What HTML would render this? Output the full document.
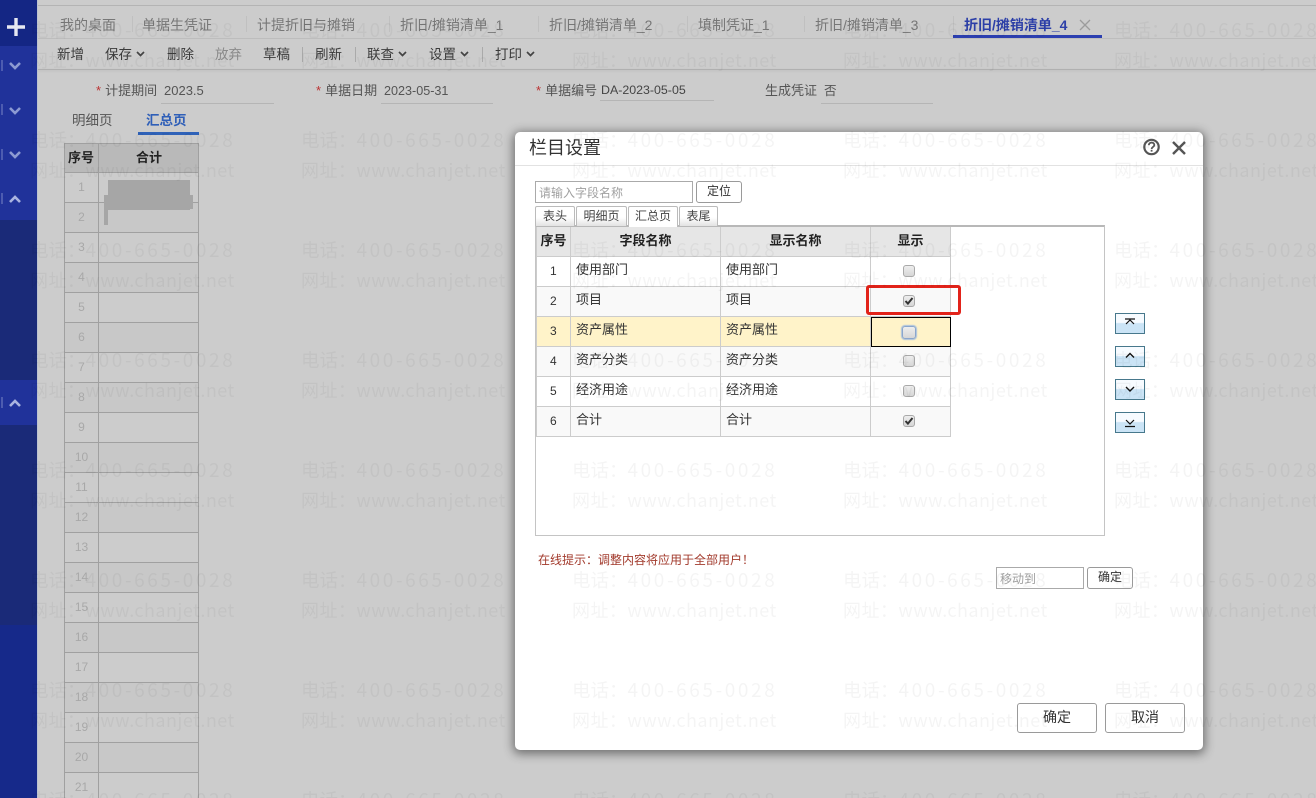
<!DOCTYPE html>
<html lang="zh-CN"><head><meta charset="utf-8"><title>栏目设置</title>
<style>
*{box-sizing:border-box}
html,body{margin:0;padding:0;width:1316px;height:798px;overflow:hidden;background:#ccc}
body{font-family:"Liberation Sans","Noto Sans CJK SC",sans-serif;color:#333;font-size:13px}
#root{position:relative;width:1316px;height:798px;overflow:hidden;background:#ccc}
.a{position:absolute;white-space:nowrap;line-height:1}
.b{position:absolute}
.tab{position:absolute;top:17px;font-size:14px;line-height:16px;color:#777;white-space:nowrap}
.tool{position:absolute;top:47px;font-size:13.5px;line-height:15px;color:#3a3a3a;white-space:nowrap}
.lab{position:absolute;top:84px;font-size:13px;line-height:14px;color:#555;white-space:nowrap}
.lab i{color:#b33;font-style:normal;margin-right:4px}
.val{position:absolute;top:84px;font-size:12.6px;line-height:14px;color:#555;white-space:nowrap}
.ul{position:absolute;top:103px;height:1px;background:#b5b5b5}
.ln{position:absolute;left:64px;width:135px;height:1px;background:#a0a0a0}
.n{position:absolute;left:65px;width:33px;text-align:center;font-size:12px;line-height:14px;color:#a8a8a8}
.st{position:absolute;left:65px;width:133px;height:30px;background:#c8c8c8}
.dlg{position:absolute;left:515px;top:132px;width:688px;height:618px;background:#fff;border-radius:5px;box-shadow:0 2px 10px 2px rgba(0,0,0,.45)}
.btn{position:absolute;background:#fff;border:1px solid #9a9a9a;border-radius:3px;text-align:center;color:#333}
.tb{position:absolute;top:206px;height:20px;border:1px solid #bbb;border-bottom:0;background:linear-gradient(#fff,#fff 55%,#e2e2e2);text-align:center;font-size:12px;line-height:18px;color:#444;border-radius:2px 2px 0 0}
.c{position:absolute;font-size:13px;line-height:16px;color:#333;white-space:nowrap}
.h{position:absolute;top:227px;height:29px;background:#e6e6e6;font-size:13px;font-weight:bold;line-height:27px;text-align:center;color:#222}
.rl{position:absolute;left:536px;width:415px;height:1px;background:#ccc}
.vl{position:absolute;top:227px;height:210px;width:1px;background:#ccc}
.cb{position:absolute;left:903px;width:12px;height:12px;border:1px solid #a9a9a9;border-radius:3px;background:linear-gradient(#eee,#d6d6d6)}
.cb svg{position:absolute;left:0;top:0}
.mv{position:absolute;left:1115px;width:30px;height:21px;border:1px solid #47788c;background:linear-gradient(#f7fbff 0,#f7fbff 45%,#cbe4f6 50%,#cbe4f6 100%)}
.mv svg{position:absolute;left:0;top:0}
.ch{position:absolute;left:8px}
.wm{position:absolute;white-space:nowrap;font-family:"Noto Sans CJK SC","Liberation Sans",sans-serif;font-size:18.5px;line-height:24px;color:rgba(0,0,0,.045);pointer-events:none}
.wm b{font-weight:normal;font-size:19px;letter-spacing:2.6px}
.u{letter-spacing:.45px;font-size:18px}
</style></head><body><div id="root">

<!-- sidebar -->
<div class="b" style="left:0;top:0;width:37px;height:46px;background:#142684"></div>
<div class="b" style="left:0;top:46px;width:37px;height:174px;background:#20329a"></div>
<div class="b" style="left:0;top:220px;width:37px;height:160px;background:#1a2a78"></div>
<div class="b" style="left:0;top:380px;width:37px;height:45px;background:#20329a"></div>
<div class="b" style="left:0;top:425px;width:37px;height:200px;background:#1a2a78"></div>
<div class="b" style="left:0;top:625px;width:37px;height:173px;background:#16298a"></div>
<div class="b" style="left:37px;top:0;width:1px;height:798px;background:#bcc3d0"></div>
<svg class="b" style="left:7px;top:18px" width="18" height="18"><path d="M9 0v18M0 9h18" stroke="#e6e8f2" stroke-width="3.4"/></svg>
<div class="b" style="left:1px;top:60px;width:2px;height:11px;background:#4d5cb0"></div>
<div class="b" style="left:1px;top:104px;width:2px;height:11px;background:#4d5cb0"></div>
<div class="b" style="left:1px;top:149px;width:2px;height:11px;background:#4d5cb0"></div>
<div class="b" style="left:1px;top:193px;width:2px;height:11px;background:#4d5cb0"></div>
<div class="b" style="left:1px;top:397px;width:2px;height:11px;background:#4d5cb0"></div>
<svg class="ch" style="top:61px" width="14" height="9"><path d="M2 2l5 5 5-5" fill="none" stroke="#8c9ad2" stroke-width="2.6"/></svg>
<svg class="ch" style="top:106px" width="14" height="9"><path d="M2 2l5 5 5-5" fill="none" stroke="#8c9ad2" stroke-width="2.6"/></svg>
<svg class="ch" style="top:150px" width="14" height="9"><path d="M2 2l5 5 5-5" fill="none" stroke="#8c9ad2" stroke-width="2.6"/></svg>
<svg class="ch" style="top:195px" width="14" height="9"><path d="M2 7l5-5 5 5" fill="none" stroke="#aab4e0" stroke-width="2.6"/></svg>
<svg class="ch" style="top:399px" width="14" height="9"><path d="M2 7l5-5 5 5" fill="none" stroke="#aab4e0" stroke-width="2.6"/></svg>

<!-- top lines -->
<div class="b" style="left:38px;top:5px;width:1278px;height:1px;background:#b4b4b4"></div>
<div class="b" style="left:38px;top:38px;width:1278px;height:1px;background:#bdbdbd"></div>
<div class="b" style="left:38px;top:69px;width:1278px;height:1px;background:#b0b0b0;box-shadow:0 1px 2px rgba(0,0,0,.1)"></div>

<!-- tabs -->
<div class="tab" style="left:60px">我的桌面</div>
<div class="tab" style="left:142px">单据生凭证</div>
<div class="tab" style="left:257px">计提折旧与摊销</div>
<div class="tab" style="left:400px">折旧/摊销清单_1</div>
<div class="tab" style="left:549px">折旧/摊销清单_2</div>
<div class="tab" style="left:698px">填制凭证_1</div>
<div class="tab" style="left:815px">折旧/摊销清单_3</div>
<div class="tab" style="left:964px;color:#2c3fa8;font-weight:bold">折旧/摊销清单_4</div>
<div class="b" style="left:132px;top:16px;width:1px;height:16px;background:#c0c0c0"></div>
<div class="b" style="left:246px;top:16px;width:1px;height:16px;background:#c0c0c0"></div>
<div class="b" style="left:389px;top:16px;width:1px;height:16px;background:#c0c0c0"></div>
<div class="b" style="left:538px;top:16px;width:1px;height:16px;background:#c0c0c0"></div>
<div class="b" style="left:687px;top:16px;width:1px;height:16px;background:#c0c0c0"></div>
<div class="b" style="left:804px;top:16px;width:1px;height:16px;background:#c0c0c0"></div>
<div class="b" style="left:953px;top:16px;width:1px;height:16px;background:#c0c0c0"></div>
<svg class="b" style="left:1079px;top:19px" width="12" height="12"><path d="M1 1l10 10M11 1L1 11" stroke="#9c9c9c" stroke-width="1.3"/></svg>
<div class="b" style="left:953px;top:35px;width:149px;height:3px;background:#2c3fb0"></div>

<!-- toolbar -->
<div class="tool" style="left:57px">新增</div>
<div class="tool" style="left:105px">保存</div>
<div class="tool" style="left:167px">删除</div>
<div class="tool" style="left:215px;color:#8a8a8a">放弃</div>
<div class="tool" style="left:263px">草稿</div>
<div class="tool" style="left:315px">刷新</div>
<div class="tool" style="left:367px">联查</div>
<div class="tool" style="left:429px">设置</div>
<div class="tool" style="left:495px">打印</div>
<svg class="b" style="left:136px;top:51px" width="9" height="7"><path d="M1 1l3.500 3.500L8 1" fill="none" stroke="#444" stroke-width="1.7"/></svg>
<svg class="b" style="left:398px;top:51px" width="9" height="7"><path d="M1 1l3.500 3.500L8 1" fill="none" stroke="#444" stroke-width="1.7"/></svg>
<svg class="b" style="left:460px;top:51px" width="9" height="7"><path d="M1 1l3.500 3.500L8 1" fill="none" stroke="#444" stroke-width="1.7"/></svg>
<svg class="b" style="left:526px;top:51px" width="9" height="7"><path d="M1 1l3.500 3.500L8 1" fill="none" stroke="#444" stroke-width="1.7"/></svg>
<div class="b" style="left:302px;top:47px;width:1px;height:15px;background:#aaa"></div>
<div class="b" style="left:355px;top:47px;width:1px;height:15px;background:#aaa"></div>
<div class="b" style="left:482px;top:47px;width:1px;height:15px;background:#aaa"></div>

<!-- form -->
<div class="lab" style="left:96px"><i>*</i>计提期间</div><div class="val" style="left:164px;font-size:13px">2023.5</div><div class="ul" style="left:161px;width:113px"></div>
<div class="lab" style="left:316px"><i>*</i>单据日期</div><div class="val" style="left:384px">2023-05-31</div><div class="ul" style="left:381px;width:112px"></div>
<div class="lab" style="left:536px"><i>*</i>单据编号</div><div class="val" style="left:601px;top:83px;color:#444;font-size:12.4px">DA-2023-05-05</div><div class="ul" style="left:600px;width:114px;top:100px"></div>
<div class="lab" style="left:765px">生成凭证</div><div class="val" style="left:824px">否</div><div class="ul" style="left:821px;width:112px"></div>
<div class="a" style="left:72px;top:113px;font-size:13.5px;line-height:15px;color:#555">明细页</div>
<div class="a" style="left:146px;top:113px;font-size:13.5px;line-height:15px;color:#2f5fb8;font-weight:bold">汇总页</div>
<div class="b" style="left:138px;top:132px;width:61px;height:3px;background:#2f62b8"></div>

<!-- left grid -->
<div class="b" style="left:64px;top:143px;width:135px;height:29px;background:#b9b9b9"></div>
<div class="st" style="top:202px"></div><div class="st" style="top:262px"></div><div class="st" style="top:322px"></div><div class="st" style="top:382px"></div><div class="st" style="top:442px"></div><div class="st" style="top:502px"></div><div class="st" style="top:562px"></div><div class="st" style="top:622px"></div><div class="st" style="top:682px"></div><div class="st" style="top:742px"></div>
<div class="b" style="left:64px;top:143px;width:1px;height:655px;background:#a0a0a0"></div>
<div class="b" style="left:98px;top:143px;width:1px;height:655px;background:#a0a0a0"></div>
<div class="b" style="left:198px;top:143px;width:1px;height:655px;background:#a0a0a0"></div>
<div class="ln" style="top:143px"></div><div class="ln" style="top:172px"></div><div class="ln" style="top:202px"></div><div class="ln" style="top:232px"></div><div class="ln" style="top:262px"></div><div class="ln" style="top:292px"></div><div class="ln" style="top:322px"></div><div class="ln" style="top:352px"></div><div class="ln" style="top:382px"></div><div class="ln" style="top:412px"></div><div class="ln" style="top:442px"></div><div class="ln" style="top:472px"></div><div class="ln" style="top:502px"></div><div class="ln" style="top:532px"></div><div class="ln" style="top:562px"></div><div class="ln" style="top:592px"></div><div class="ln" style="top:622px"></div><div class="ln" style="top:652px"></div><div class="ln" style="top:682px"></div><div class="ln" style="top:712px"></div><div class="ln" style="top:742px"></div><div class="ln" style="top:772px"></div>
<div class="a" style="left:68px;top:150px;font-size:13px;line-height:15px;font-weight:bold;color:#222">序号</div>
<div class="a" style="left:136px;top:150px;font-size:13px;line-height:15px;font-weight:bold;color:#222">合计</div>
<div class="n" style="top:180px">1</div><div class="n" style="top:210px">2</div><div class="n" style="top:240px">3</div><div class="n" style="top:270px">4</div><div class="n" style="top:300px">5</div><div class="n" style="top:330px">6</div><div class="n" style="top:360px">7</div><div class="n" style="top:390px">8</div><div class="n" style="top:420px">9</div><div class="n" style="top:450px">10</div><div class="n" style="top:480px">11</div><div class="n" style="top:510px">12</div><div class="n" style="top:540px">13</div><div class="n" style="top:570px">14</div><div class="n" style="top:600px">15</div><div class="n" style="top:630px">16</div><div class="n" style="top:660px">17</div><div class="n" style="top:690px">18</div><div class="n" style="top:720px">19</div><div class="n" style="top:750px">20</div><div class="n" style="top:780px">21</div>
<div class="b" style="left:108px;top:180px;width:82px;height:30px;background:#a6a6a6"></div>
<div class="b" style="left:104px;top:195px;width:89px;height:14px;background:#a6a6a6"></div>
<div class="b" style="left:104px;top:195px;width:4px;height:30px;background:#a6a6a6"></div>

<!-- dialog -->
<div class="dlg"></div>
<div class="a" style="left:529px;top:138px;font-size:18px;line-height:20px;color:#333">栏目设置</div>
<div class="b" style="left:515px;top:165px;width:688px;height:1px;background:#e2e2e2"></div>
<svg class="b" style="left:1142px;top:137px" width="20" height="20"><circle cx="9.500" cy="10" r="7.200" fill="none" stroke="#555" stroke-width="2.200"/><path d="M6.800 8.200c.2-3.600 5.600-3.400 5.500-.2 0 2-2.600 1.900-2.700 4" fill="none" stroke="#555" stroke-width="1.800"/><rect x="8.700" y="12.800" width="1.800" height="1.800" fill="#555"/></svg>
<svg class="b" style="left:1171px;top:140px" width="16" height="16"><path d="M2 2l12 12M14 2L2 14" stroke="#555" stroke-width="2.400"/></svg>

<div class="b" style="left:535px;top:181px;width:158px;height:22px;border:1px solid #aaa;background:#fff"></div>
<div class="a" style="left:539px;top:186px;font-size:12px;line-height:14px;color:#a0a0a0">请输入字段名称</div>
<div class="btn" style="left:696px;top:181px;width:46px;height:22px;font-size:12px;line-height:19px">定位</div>

<div class="b" style="left:535px;top:225px;width:570px;height:311px;border:1px solid #c4c4c4;border-top:2px solid #b8b8b8;background:transparent"></div>
<div class="tb" style="left:535px;width:40px">表头</div>
<div class="tb" style="left:576px;width:51px">明细页</div>
<div class="tb" style="left:628px;width:50px;background:#fff;height:21px">汇总页</div>
<div class="tb" style="left:679px;width:39px">表尾</div>

<div class="b" style="left:536px;top:286px;width:414px;height:30px;background:#f9f9f9"></div>
<div class="b" style="left:536px;top:316px;width:414px;height:30px;background:#fff3c9"></div>
<div class="b" style="left:536px;top:346px;width:414px;height:30px;background:#f9f9f9"></div>
<div class="b" style="left:536px;top:406px;width:414px;height:30px;background:#f9f9f9"></div>
<div class="h" style="left:537px;width:33px">序号</div>
<div class="h" style="left:571px;width:149px">字段名称</div>
<div class="h" style="left:721px;width:149px">显示名称</div>
<div class="h" style="left:871px;width:79px">显示</div>
<div class="rl" style="top:256px"></div><div class="rl" style="top:286px"></div><div class="rl" style="top:316px"></div><div class="rl" style="top:346px"></div><div class="rl" style="top:376px"></div><div class="rl" style="top:406px"></div><div class="rl" style="top:436px"></div>
<div class="vl" style="left:536px"></div><div class="vl" style="left:570px"></div><div class="vl" style="left:720px"></div><div class="vl" style="left:870px"></div><div class="vl" style="left:950px"></div>

<div class="c" style="left:550px;top:263px;font-size:12px">1</div><div class="c" style="left:576px;top:262px">使用部门</div><div class="c" style="left:726px;top:262px">使用部门</div>
<div class="c" style="left:550px;top:293px;font-size:12px">2</div><div class="c" style="left:576px;top:292px">项目</div><div class="c" style="left:726px;top:292px">项目</div>
<div class="c" style="left:550px;top:323px;font-size:12px">3</div><div class="c" style="left:576px;top:322px">资产属性</div><div class="c" style="left:726px;top:322px">资产属性</div>
<div class="c" style="left:550px;top:353px;font-size:12px">4</div><div class="c" style="left:576px;top:352px">资产分类</div><div class="c" style="left:726px;top:352px">资产分类</div>
<div class="c" style="left:550px;top:383px;font-size:12px">5</div><div class="c" style="left:576px;top:382px">经济用途</div><div class="c" style="left:726px;top:382px">经济用途</div>
<div class="c" style="left:550px;top:413px;font-size:12px">6</div><div class="c" style="left:576px;top:412px">合计</div><div class="c" style="left:726px;top:412px">合计</div>

<div class="b" style="left:871px;top:317px;width:80px;height:30px;border:1px solid #000;background:#fff3c9"></div>
<div class="cb" style="top:265px"></div>
<div class="cb" style="top:295px"><svg width="10" height="10"><path d="M1.500 5l2.400 2.600L8.500 2" fill="none" stroke="#333" stroke-width="2"/></svg></div>
<div class="cb" style="top:326px;left:902px;width:14px;height:13px;border:1px solid #8aa6cc;box-shadow:0 0 1px 1px #a8c0de"></div>
<div class="cb" style="top:355px"></div>
<div class="cb" style="top:385px"></div>
<div class="cb" style="top:415px"><svg width="10" height="10"><path d="M1.500 5l2.400 2.600L8.500 2" fill="none" stroke="#333" stroke-width="2"/></svg></div>
<div class="b" style="left:866px;top:285px;width:95px;height:30px;border:3px solid #e2231a;border-radius:3px"></div>

<div class="mv" style="top:313px"><svg width="28" height="19"><path d="M9 5h10M10 10l4-4 4 4" fill="none" stroke="#111" stroke-width="1.200"/></svg></div>
<div class="mv" style="top:346px"><svg width="28" height="19"><path d="M10 10.500l4-4 4 4" fill="none" stroke="#111" stroke-width="1.400"/></svg></div>
<div class="mv" style="top:379px"><svg width="28" height="19"><path d="M10 7l4 4 4-4" fill="none" stroke="#111" stroke-width="1.400"/></svg></div>
<div class="mv" style="top:412px"><svg width="28" height="19"><path d="M10 7l4 4 4-4M9 13.500h10" fill="none" stroke="#111" stroke-width="1.200"/></svg></div>

<div class="a" style="left:538px;top:553px;font-size:12px;line-height:14px;color:#a23a2c">在线提示：调整内容将应用于全部用户！</div>
<div class="b" style="left:996px;top:567px;width:88px;height:22px;border:1px solid #aaa;background:#fff"></div>
<div class="a" style="left:1000px;top:572px;font-size:12px;line-height:14px;color:#a0a0a0">移动到</div>
<div class="btn" style="left:1087px;top:567px;width:46px;height:22px;font-size:12px;line-height:19px">确定</div>
<div class="btn" style="left:1017px;top:703px;width:80px;height:30px;font-size:14px;line-height:27px">确定</div>
<div class="btn" style="left:1105px;top:703px;width:80px;height:30px;font-size:14px;line-height:27px">取消</div>

<!-- watermark -->
<div class="wm" style="left:30px;top:18px">电话：<b>400-665-0028</b></div><div class="wm" style="left:301px;top:18px">电话：<b>400-665-0028</b></div><div class="wm" style="left:572px;top:18px">电话：<b>400-665-0028</b></div><div class="wm" style="left:843px;top:18px">电话：<b>400-665-0028</b></div><div class="wm" style="left:1114px;top:18px">电话：<b>400-665-0028</b></div>
<div class="wm u" style="left:30px;top:48px">网址：www.chanjet.net</div><div class="wm u" style="left:301px;top:48px">网址：www.chanjet.net</div><div class="wm u" style="left:572px;top:48px">网址：www.chanjet.net</div><div class="wm u" style="left:843px;top:48px">网址：www.chanjet.net</div><div class="wm u" style="left:1114px;top:48px">网址：www.chanjet.net</div>
<div class="wm" style="left:30px;top:128px">电话：<b>400-665-0028</b></div><div class="wm" style="left:301px;top:128px">电话：<b>400-665-0028</b></div><div class="wm" style="left:572px;top:128px">电话：<b>400-665-0028</b></div><div class="wm" style="left:843px;top:128px">电话：<b>400-665-0028</b></div><div class="wm" style="left:1114px;top:128px">电话：<b>400-665-0028</b></div>
<div class="wm u" style="left:30px;top:158px">网址：www.chanjet.net</div><div class="wm u" style="left:301px;top:158px">网址：www.chanjet.net</div><div class="wm u" style="left:572px;top:158px">网址：www.chanjet.net</div><div class="wm u" style="left:843px;top:158px">网址：www.chanjet.net</div><div class="wm u" style="left:1114px;top:158px">网址：www.chanjet.net</div>
<div class="wm" style="left:30px;top:238px">电话：<b>400-665-0028</b></div><div class="wm" style="left:301px;top:238px">电话：<b>400-665-0028</b></div><div class="wm" style="left:572px;top:238px">电话：<b>400-665-0028</b></div><div class="wm" style="left:843px;top:238px">电话：<b>400-665-0028</b></div><div class="wm" style="left:1114px;top:238px">电话：<b>400-665-0028</b></div>
<div class="wm u" style="left:30px;top:268px">网址：www.chanjet.net</div><div class="wm u" style="left:301px;top:268px">网址：www.chanjet.net</div><div class="wm u" style="left:572px;top:268px">网址：www.chanjet.net</div><div class="wm u" style="left:843px;top:268px">网址：www.chanjet.net</div><div class="wm u" style="left:1114px;top:268px">网址：www.chanjet.net</div>
<div class="wm" style="left:30px;top:348px">电话：<b>400-665-0028</b></div><div class="wm" style="left:301px;top:348px">电话：<b>400-665-0028</b></div><div class="wm" style="left:572px;top:348px">电话：<b>400-665-0028</b></div><div class="wm" style="left:843px;top:348px">电话：<b>400-665-0028</b></div><div class="wm" style="left:1114px;top:348px">电话：<b>400-665-0028</b></div>
<div class="wm u" style="left:30px;top:378px">网址：www.chanjet.net</div><div class="wm u" style="left:301px;top:378px">网址：www.chanjet.net</div><div class="wm u" style="left:572px;top:378px">网址：www.chanjet.net</div><div class="wm u" style="left:843px;top:378px">网址：www.chanjet.net</div><div class="wm u" style="left:1114px;top:378px">网址：www.chanjet.net</div>
<div class="wm" style="left:30px;top:458px">电话：<b>400-665-0028</b></div><div class="wm" style="left:301px;top:458px">电话：<b>400-665-0028</b></div><div class="wm" style="left:572px;top:458px">电话：<b>400-665-0028</b></div><div class="wm" style="left:843px;top:458px">电话：<b>400-665-0028</b></div><div class="wm" style="left:1114px;top:458px">电话：<b>400-665-0028</b></div>
<div class="wm u" style="left:30px;top:488px">网址：www.chanjet.net</div><div class="wm u" style="left:301px;top:488px">网址：www.chanjet.net</div><div class="wm u" style="left:572px;top:488px">网址：www.chanjet.net</div><div class="wm u" style="left:843px;top:488px">网址：www.chanjet.net</div><div class="wm u" style="left:1114px;top:488px">网址：www.chanjet.net</div>
<div class="wm" style="left:30px;top:568px">电话：<b>400-665-0028</b></div><div class="wm" style="left:301px;top:568px">电话：<b>400-665-0028</b></div><div class="wm" style="left:572px;top:568px">电话：<b>400-665-0028</b></div><div class="wm" style="left:843px;top:568px">电话：<b>400-665-0028</b></div><div class="wm" style="left:1114px;top:568px">电话：<b>400-665-0028</b></div>
<div class="wm u" style="left:30px;top:598px">网址：www.chanjet.net</div><div class="wm u" style="left:301px;top:598px">网址：www.chanjet.net</div><div class="wm u" style="left:572px;top:598px">网址：www.chanjet.net</div><div class="wm u" style="left:843px;top:598px">网址：www.chanjet.net</div><div class="wm u" style="left:1114px;top:598px">网址：www.chanjet.net</div>
<div class="wm" style="left:30px;top:678px">电话：<b>400-665-0028</b></div><div class="wm" style="left:301px;top:678px">电话：<b>400-665-0028</b></div><div class="wm" style="left:572px;top:678px">电话：<b>400-665-0028</b></div><div class="wm" style="left:843px;top:678px">电话：<b>400-665-0028</b></div><div class="wm" style="left:1114px;top:678px">电话：<b>400-665-0028</b></div>
<div class="wm u" style="left:30px;top:708px">网址：www.chanjet.net</div><div class="wm u" style="left:301px;top:708px">网址：www.chanjet.net</div><div class="wm u" style="left:572px;top:708px">网址：www.chanjet.net</div><div class="wm u" style="left:843px;top:708px">网址：www.chanjet.net</div><div class="wm u" style="left:1114px;top:708px">网址：www.chanjet.net</div>
<div class="wm" style="left:30px;top:788px">电话：<b>400-665-0028</b></div><div class="wm" style="left:301px;top:788px">电话：<b>400-665-0028</b></div><div class="wm" style="left:572px;top:788px">电话：<b>400-665-0028</b></div><div class="wm" style="left:843px;top:788px">电话：<b>400-665-0028</b></div><div class="wm" style="left:1114px;top:788px">电话：<b>400-665-0028</b></div>
</div></body></html>
